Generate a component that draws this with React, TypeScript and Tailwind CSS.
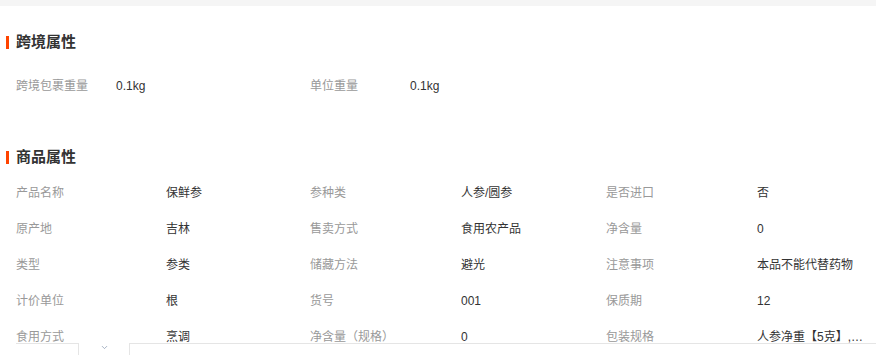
import { ChevronDown } from 'lucide-react';

const crossBorder = [
  { label: '跨境包裹重量', value: '0.1kg' },
  { label: '单位重量', value: '0.1kg' },
];

const productRows = [
  [
    { label: '产品名称', value: '保鲜参' },
    { label: '参种类', value: '人参/圆参' },
    { label: '是否进口', value: '否' },
  ],
  [
    { label: '原产地', value: '吉林' },
    { label: '售卖方式', value: '食用农产品' },
    { label: '净含量', value: '0' },
  ],
  [
    { label: '类型', value: '参类' },
    { label: '储藏方法', value: '避光' },
    { label: '注意事项', value: '本品不能代替药物' },
  ],
  [
    { label: '计价单位', value: '根' },
    { label: '货号', value: '001' },
    { label: '保质期', value: '12' },
  ],
  [
    { label: '食用方式', value: '烹调' },
    { label: '净含量（规格）', value: '0' },
    { label: '包装规格', value: '人参净重【5克】,人参净重【10克】' },
  ],
];

function SectionTitle({ title }: { title: string }) {
  return (
    <div className="flex items-center h-5 pl-[6px]">
      <span className="w-[3px] h-[13px] bg-[#ff4400]" />
      <h2 className="ml-[7px] text-[15px] leading-5 font-bold text-[#333]">{title}</h2>
    </div>
  );
}

export default function App() {
  return (
    <div
      className="relative h-[355px] w-[876px] overflow-hidden bg-white"
      style={{ fontFamily: '"Liberation Sans", "Noto Sans CJK SC", sans-serif' }}
    >
      <div className="h-[6px] bg-[#f5f5f5]" />

      <div className="mt-[26px]">
        <SectionTitle title="跨境属性" />
      </div>
      <div className="mt-[24px] pl-[16px] flex text-xs leading-5">
        {crossBorder.map((item) => (
          <div key={item.label} className="flex w-[294px]">
            <span className="w-[100px] text-[#999]">{item.label}</span>
            <span className="text-[#333]">{item.value}</span>
          </div>
        ))}
      </div>

      <div className="mt-[51px]">
        <SectionTitle title="商品属性" />
      </div>
      <div className="mt-[8px] pl-[16px] text-xs">
        {productRows.map((row, i) => (
          <div key={i} className="flex items-center h-[36px]">
            {row.map((item, j) => (
              <div key={item.label} className={`flex ${j === 0 ? 'w-[294px]' : j === 1 ? 'w-[296px]' : 'flex-1'}`}>
                <span className={`${j === 0 ? 'w-[150px]' : 'w-[151px]'} shrink-0 text-[#999]`}>{item.label}</span>
                <span className="w-[114px] truncate text-[#333]">{item.value}</span>
              </div>
            ))}
          </div>
        ))}
      </div>

      <div className="absolute left-[16px] top-[343px] w-[63px] h-[20px] bg-white border-t border-r border-[#e5e5e5]" />
      <ChevronDown className="absolute left-[100px] top-[343px] w-[9px] h-[9px] text-[#8a9ab0]" strokeWidth={2} />
      <div className="absolute left-[129px] right-0 top-[343px] h-[20px] bg-white border-t border-l border-[#e5e5e5]" />
    </div>
  );
}
